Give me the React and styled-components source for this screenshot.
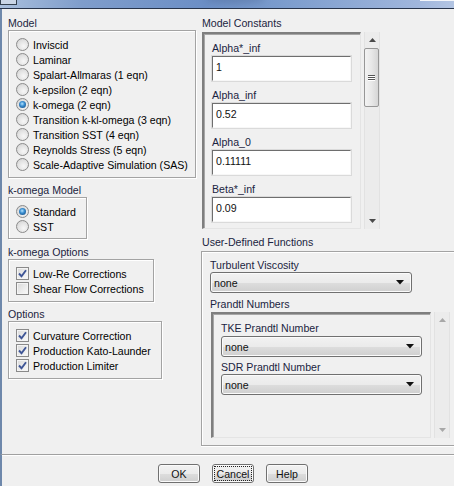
import React from "react";
import styled, { createGlobalStyle } from "styled-components";

const Global = createGlobalStyle`
  html, body {
    margin: 0;
    padding: 0;
    background: #f0f0f0;
  }
  * {
    box-sizing: border-box;
  }
`;

const models = [
  "Inviscid",
  "Laminar",
  "Spalart-Allmaras (1 eqn)",
  "k-epsilon (2 eqn)",
  "k-omega (2 eqn)",
  "Transition k-kl-omega (3 eqn)",
  "Transition SST (4 eqn)",
  "Reynolds Stress (5 eqn)",
  "Scale-Adaptive Simulation (SAS)",
];

const constants = [
  { name: "Alpha*_inf", value: "1" },
  { name: "Alpha_inf", value: "0.52" },
  { name: "Alpha_0", value: "0.11111" },
  { name: "Beta*_inf", value: "0.09" },
];

function Radio({ checked, children }) {
  return (
    <Item>
      <RadioDot $on={checked} />
      <span>{children}</span>
    </Item>
  );
}

function Check({ checked, children }) {
  return (
    <Item>
      <CheckBox>
        {checked && (
          <svg width="11" height="11" viewBox="0 0 11 11">
            <path
              d="M2 5.5 L4.5 8.2 L9 2.2"
              fill="none"
              stroke="#3e5596"
              strokeWidth="1.9"
            />
          </svg>
        )}
      </CheckBox>
      <span>{children}</span>
    </Item>
  );
}

function Combo({ value, w }) {
  return (
    <ComboBox $w={w}>
      <span>{value}</span>
      <svg width="8" height="5" viewBox="0 0 8 5">
        <path d="M0 0 H8 L4 4.5 Z" fill="#111" />
      </svg>
    </ComboBox>
  );
}

function ScrollBar({ disabled }) {
  const c = disabled ? "#a8a8a8" : "#4a4a4a";
  return (
    <Scroll>
      <Arrow>
        <svg width="7" height="4" viewBox="0 0 7 4">
          <path d="M0 4 H7 L3.5 0 Z" fill={c} />
        </svg>
      </Arrow>
      <Track>
        {!disabled && (
          <Thumb>
            <Grip />
            <Grip />
            <Grip />
          </Thumb>
        )}
      </Track>
      <Arrow>
        <svg width="7" height="4" viewBox="0 0 7 4">
          <path d="M0 0 H7 L3.5 4 Z" fill={c} />
        </svg>
      </Arrow>
    </Scroll>
  );
}

export default function App() {
  return (
    <Window>
      <Global />
      <TitleBar>
        <SysIcon />
        <TitleGlow />
        <TitleCorner />
      </TitleBar>
      <Body>
        <Column $w={188}>
          <GroupLabel>Model</GroupLabel>
          <Group $w={188}>
            {models.map((m) => (
              <Radio key={m} checked={m === "k-omega (2 eqn)"}>
                {m}
              </Radio>
            ))}
          </Group>

          <GroupLabel $mt={6}>k-omega Model</GroupLabel>
          <Group $w={79} $pb={4}>
            <Radio checked>Standard</Radio>
            <Radio>SST</Radio>
          </Group>

          <GroupLabel $mt={7}>k-omega Options</GroupLabel>
          <Group $w={146}>
            <Check checked>Low-Re Corrections</Check>
            <Check>Shear Flow Corrections</Check>
          </Group>

          <GroupLabel $mt={6}>Options</GroupLabel>
          <Group $w={154}>
            <Check checked>Curvature Correction</Check>
            <Check checked>Production Kato-Launder</Check>
            <Check checked>Production Limiter</Check>
          </Group>
        </Column>

        <RightColumn>
          <GroupLabel $pl={1} $mb={2}>
            Model Constants
          </GroupLabel>
          <ScrollRow $ml={1} $h={197}>
            <Sunken $w={159}>
              {constants.map((c) => (
                <Field key={c.name}>
                  <FieldLabel>{c.name}</FieldLabel>
                  <TextInput>{c.value}</TextInput>
                </Field>
              ))}
            </Sunken>
            <ScrollBar />
          </ScrollRow>

          <GroupLabel $mt={7} $pl={1} $mb={2}>
            User-Defined Functions
          </GroupLabel>
          <UdfBox>
            <FieldLabel $mb={0}>Turbulent Viscosity</FieldLabel>
            <Combo value="none" w={202} />
            <FieldLabel $mt={4}>Prandtl Numbers</FieldLabel>
            <ScrollRow $ml={1} $h={126}>
              <Sunken $w={220}>
                <FieldLabel>TKE Prandtl Number</FieldLabel>
                <Combo value="none" w={201} />
                <FieldLabel $mt={3} $mb={0}>
                  SDR Prandtl Number
                </FieldLabel>
                <Combo value="none" w={201} />
              </Sunken>
              <ScrollBar disabled />
            </ScrollRow>
          </UdfBox>
        </RightColumn>
      </Body>
      <Footer>
        <Button>OK</Button>
        <Button $focus>Cancel</Button>
        <Button>Help</Button>
      </Footer>
    </Window>
  );
}

const Window = styled.div`
  width: 454px;
  height: 486px;
  overflow: hidden;
  background: #f0f0f0;
  font-family: "Liberation Sans", Arial, sans-serif;
  font-size: 10.6px;
  color: #000;
  display: flex;
  flex-direction: column;
`;

const TitleBar = styled.div`
  position: relative;
  height: 9px;
  flex: none;
  background: linear-gradient(
    90deg,
    #a9bfdd 0%,
    #7f9dcb 18%,
    #6c8fc6 45%,
    #7b9ccd 62%,
    #a0b6dc 92%,
    #b3c5e3 100%
  );
  border-bottom: 1px solid #27344b;
  overflow: hidden;
`;

const SysIcon = styled.div`
  position: absolute;
  left: 0;
  top: -2px;
  width: 17px;
  height: 7px;
  border: 1px solid #33404f;
  background: #c9d5e6;
`;

const TitleGlow = styled.div`
  position: absolute;
  left: 205px;
  top: -6px;
  width: 60px;
  height: 10px;
  border-radius: 50%;
  background: rgba(60, 80, 120, 0.25);
  filter: blur(3px);
`;

const TitleCorner = styled.div`
  position: absolute;
  right: 0;
  top: 0;
  width: 34px;
  height: 1px;
  background: #f4f6fa;
`;

const Body = styled.div`
  flex: 1;
  display: flex;
  gap: 5px;
  padding: 8px 0 0 6px;
  border-left: 2px solid #6e88ab;
`;

const Column = styled.div`
  width: ${(p) => p.$w}px;
  display: flex;
  flex-direction: column;
  align-items: flex-start;
`;

const RightColumn = styled.div`
  flex: 1;
  display: flex;
  flex-direction: column;
  align-items: flex-start;
`;

const GroupLabel = styled.div`
  height: 13px;
  line-height: 13px;
  margin-top: ${(p) => p.$mt || 0}px;
  margin-bottom: ${(p) => p.$mb || 0}px;
  padding-left: ${(p) => p.$pl || 0}px;
  color: #1a2440;
  white-space: nowrap;
`;

const Group = styled.div`
  width: ${(p) => p.$w}px;
  padding: 6px 0 ${(p) => p.$pb ?? 5}px 7px;
  border: 1px solid #a3a3a3;
  box-shadow: inset 1px 1px 0 #fff, 1px 1px 0 #fff;
  display: flex;
  flex-direction: column;
`;

const Item = styled.div`
  height: 15px;
  display: flex;
  align-items: center;
  gap: 4px;
  white-space: nowrap;
`;

const RadioDot = styled.div`
  position: relative;
  width: 13px;
  height: 13px;
  flex: none;
  border-radius: 50%;
  border: 1px solid #8a8a8a;
  background: radial-gradient(circle at 60% 65%, #f7f7f7 0%, #e2e2e2 55%, #cbcbcb 100%);
  &::after {
    content: "";
    display: ${(p) => (p.$on ? "block" : "none")};
    position: absolute;
    left: 2px;
    top: 2px;
    width: 7px;
    height: 7px;
    border-radius: 50%;
    background: radial-gradient(circle at 45% 40%, #b5e4ff 0%, #3a8ed0 40%, #0f3f74 100%);
  }
`;

const CheckBox = styled.div`
  width: 13px;
  height: 13px;
  flex: none;
  border: 1px solid #8a8a8a;
  background: linear-gradient(135deg, #d9d9d9 0%, #ededed 60%, #fafafa 100%);
  box-shadow: inset 0 0 0 1px #f4f4f4;
  display: flex;
  align-items: center;
  justify-content: center;
`;

const ScrollRow = styled.div`
  display: flex;
  gap: 3px;
  height: ${(p) => p.$h}px;
  margin-left: ${(p) => p.$ml || 0}px;
`;

const Sunken = styled.div`
  width: ${(p) => p.$w}px;
  height: 100%;
  overflow: hidden;
  padding: 7px 0 0 8px;
  border-top: 2px solid #7e7e7e;
  border-left: 2px solid #7e7e7e;
  border-right: 1px solid #e4e4e4;
  border-bottom: 1px solid #e4e4e4;
  box-shadow: inset 1px 1px 0 #a6a6a6;
`;

const Field = styled.div`
  display: flex;
  flex-direction: column;
  margin-bottom: 7px;
`;

const FieldLabel = styled.div`
  height: 14px;
  line-height: 14px;
  margin-top: ${(p) => p.$mt || 0}px;
  margin-bottom: ${(p) => p.$mb ?? 1}px;
  color: #1a2440;
  white-space: nowrap;
`;

const TextInput = styled.div`
  width: 139px;
  height: 25px;
  padding: 4px 0 0 3px;
  background: #fff;
  border: 1px solid;
  border-color: #6e6e6e #f7f7f7 #f7f7f7 #6e6e6e;
  box-shadow: 0 0 0 1px #dadada;
  line-height: 13px;
  color: #111;
`;

const ComboBox = styled.div`
  width: ${(p) => p.$w}px;
  height: 21px;
  flex: none;
  display: flex;
  align-items: center;
  justify-content: space-between;
  padding: 0 7px 0 3px;
  border: 1px solid #707070;
  border-radius: 3px;
  background: linear-gradient(180deg, #f2f2f2 0%, #ebebeb 50%, #dddddd 51%, #cfcfcf 100%);
  box-shadow: inset 0 0 0 1px #fbfbfb;
  color: #111;
`;

const Scroll = styled.div`
  width: 16px;
  height: 100%;
  display: flex;
  flex-direction: column;
  background: #ececec;
  border-left: 1px solid #e2e2e2;
  border-right: 1px solid #e2e2e2;
`;

const Arrow = styled.div`
  height: 16px;
  flex: none;
  display: flex;
  align-items: center;
  justify-content: center;
`;

const Track = styled.div`
  flex: 1;
`;

const Thumb = styled.div`
  width: 15px;
  height: 59px;
  margin-left: -1px;
  border: 1px solid #979797;
  border-radius: 2px;
  background: linear-gradient(90deg, #f3f3f3 0%, #e8e8e8 50%, #d6d6d6 100%);
  display: flex;
  flex-direction: column;
  align-items: center;
  justify-content: center;
  gap: 1px;
`;

const Grip = styled.div`
  width: 7px;
  height: 1px;
  background: #555;
  box-shadow: 0 1px 0 #fff;
`;

const UdfBox = styled.div`
  width: 100%;
  height: 195px;
  padding: 6px 0 0 8px;
  border: 1px solid #a3a3a3;
  border-right: none;
  box-shadow: inset 1px 1px 0 #fff, 0 1px 0 #fff;
  display: flex;
  flex-direction: column;
  align-items: flex-start;
`;

const Footer = styled.div`
  height: 32px;
  flex: none;
  display: flex;
  justify-content: center;
  gap: 12px;
  padding: 9px 0 0 10px;
  border-left: 2px solid #6e88ab;
  border-top: 1px solid #a0a0a0;
  box-shadow: inset 0 1px 0 #fff;
`;

const Button = styled.div`
  position: relative;
  width: 42px;
  height: 19px;
  display: flex;
  align-items: center;
  justify-content: center;
  border: 1px solid #707070;
  border-radius: 3px;
  background: linear-gradient(180deg, #f2f2f2 0%, #ebebeb 50%, #dddddd 51%, #cfcfcf 100%);
  box-shadow: inset 0 0 0 1px #fbfbfb;
  color: #111;
  &::after {
    content: "";
    display: ${(p) => (p.$focus ? "block" : "none")};
    position: absolute;
    inset: 1px;
    border: 1px dotted #222;
  }
`;
